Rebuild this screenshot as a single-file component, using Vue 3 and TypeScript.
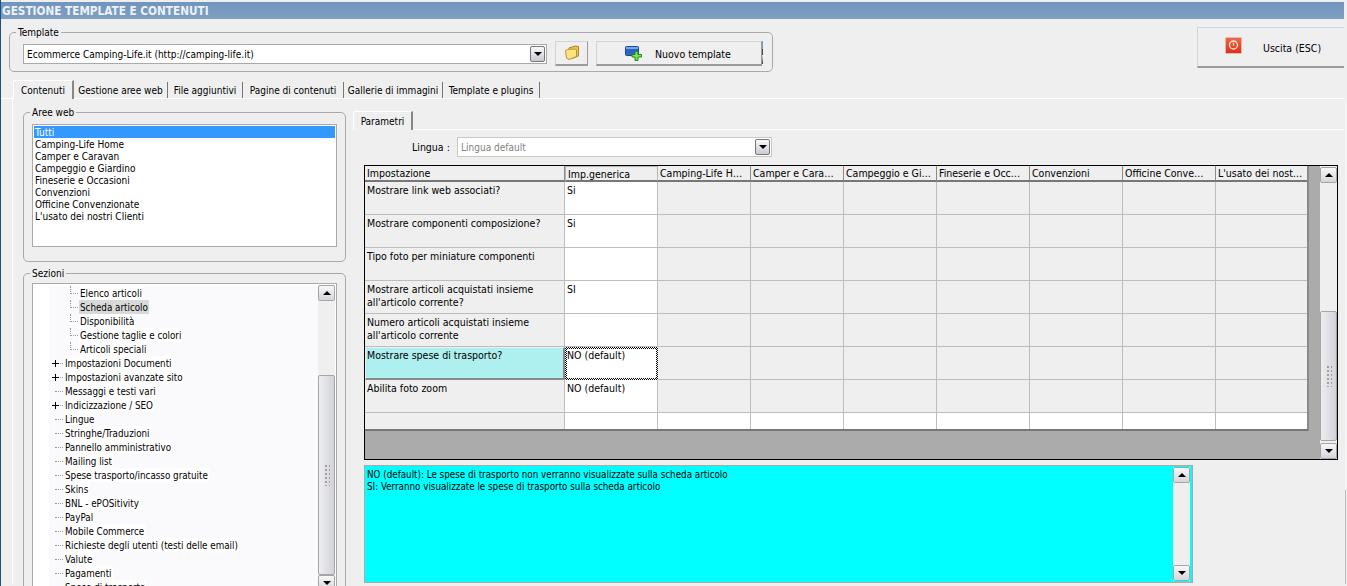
<script setup lang="ts">
interface Tab { label: string; width: number }
interface TreeItem { label: string; level: number; plus?: boolean; selected?: boolean }
interface GridRow { lines: string[]; value: string; active?: boolean }

const tabs: Tab[] = [
  { label: 'Contenuti', width: 61 },
  { label: 'Gestione aree web', width: 94 },
  { label: 'File aggiuntivi', width: 75 },
  { label: 'Pagine di contenuti', width: 101 },
  { label: 'Gallerie di immagini', width: 99 },
  { label: 'Template e plugins', width: 97 },
]
const areas = ['Camping-Life Home', 'Camper e Caravan', 'Campeggio e Giardino', 'Fineserie e Occasioni', 'Convenzioni', 'Officine Convenzionate', "L'usato dei nostri Clienti"]
const tree: TreeItem[] = [
  { label: 'Elenco articoli', level: 2 },
  { label: 'Scheda articolo', level: 2, selected: true },
  { label: 'Disponibilità', level: 2 },
  { label: 'Gestione taglie e colori', level: 2 },
  { label: 'Articoli speciali', level: 2 },
  { label: 'Impostazioni Documenti', level: 1, plus: true },
  { label: 'Impostazioni avanzate sito', level: 1, plus: true },
  { label: 'Messaggi e testi vari', level: 1 },
  { label: 'Indicizzazione / SEO', level: 1, plus: true },
  { label: 'Lingue', level: 1 },
  { label: 'Stringhe/Traduzioni', level: 1 },
  { label: 'Pannello amministrativo', level: 1 },
  { label: 'Mailing list', level: 1 },
  { label: 'Spese trasporto/incasso gratuite', level: 1 },
  { label: 'Skins', level: 1 },
  { label: 'BNL - ePOSitivity', level: 1 },
  { label: 'PayPal', level: 1 },
  { label: 'Mobile Commerce', level: 1 },
  { label: 'Richieste degli utenti (testi delle email)', level: 1 },
  { label: 'Valute', level: 1 },
  { label: 'Pagamenti', level: 1 },
  { label: 'Spese di trasporto', level: 1 },
]
const headers = ['Impostazione', 'Imp.generica', 'Camping-Life H…', 'Camper e Cara…', 'Campeggio e Gi…', 'Fineserie e Occ…', 'Convenzioni', 'Officine Conve…', "L'usato dei nost…"]
const rows: GridRow[] = [
  { lines: ['Mostrare link web associati?'], value: 'Si' },
  { lines: ['Mostrare componenti composizione?'], value: 'Si' },
  { lines: ['Tipo foto per miniature componenti'], value: '' },
  { lines: ['Mostrare articoli acquistati insieme', "all'articolo corrente?"], value: 'SI' },
  { lines: ['Numero articoli acquistati insieme', "all'articolo corrente"], value: '' },
  { lines: ['Mostrare spese di trasporto?'], value: 'NO (default)', active: true },
  { lines: ['Abilita foto zoom'], value: 'NO (default)' },
]
const blanks = Array.from({ length: 7 }, (_, i) => i)
</script>

<template>
  <div class="app">
    <div class="title">GESTIONE TEMPLATE E CONTENUTI</div>

    <div class="head">
      <fieldset class="group template">
        <legend>Template</legend>
        <div class="template-row">
          <div class="combo main-combo">
            <span class="combo-text">Ecommerce Camping-Life.it (http://camping-life.it)</span>
            <span class="combo-btn"><i class="down"></i></span>
          </div>
          <button class="btn folder" type="button" aria-label="Apri">
            <svg width="16" height="16" viewBox="0 0 16 16">
              <path d="M5 3 L11 1 L14.5 1.5 V11 L8 13.5 L5 12.5 Z" fill="#f0c93e" stroke="#a8842e" stroke-width="1" />
              <path d="M1.5 5.5 L3.5 4.5 L9.5 4 L12.5 4.5 V11.5 L5 14.5 L2.5 13 Z" fill="#fbe27a" stroke="#b8923a" stroke-width="1" />
            </svg>
          </button>
          <button class="btn new" type="button">
            <svg width="18" height="15" viewBox="0 0 18 15">
              <rect x="0.5" y="0.5" width="13" height="9" rx="1" fill="#2a62c8" stroke="#1c4a9a" />
              <rect x="1" y="1" width="12" height="2" fill="#78a6ea" />
              <path d="M10 5.5 H13 V8.5 H16.5 V11 H13 V14.5 H10 V11 H7 V8.5 H10 Z" fill="#7ee04e" stroke="#1f8a1f" stroke-width="1" />
            </svg>
            <span>Nuovo template</span>
          </button>
          <span class="btn-edge"></span>
        </div>
      </fieldset>
      <button class="btn exit" type="button">
        <svg width="17" height="17" viewBox="0 0 17 17">
          <defs>
            <linearGradient id="exit-red" x1="0" y1="0" x2="0" y2="1">
              <stop offset="0" stop-color="#ef6a45" />
              <stop offset="1" stop-color="#d5321c" />
            </linearGradient>
          </defs>
          <rect x="0.5" y="0.5" width="16" height="16" rx="1" fill="url(#exit-red)" stroke="#eeb5a5" />
          <circle cx="8.5" cy="8" r="4" fill="none" stroke="#fbe3dc" stroke-width="1.3" />
          <path d="M8.5 5.5 V8.5" stroke="#fbe3dc" stroke-width="1.3" />
        </svg>
        <span>Uscita (ESC)</span>
      </button>
    </div>

    <div class="tabs">
      <div
        v-for="(tab, i) in tabs"
        :key="tab.label"
        class="tab"
        :class="{ on: i === 0 }"
        :style="{ width: tab.width + 'px' }"
      >{{ tab.label }}</div>
    </div>

    <div class="body">
      <div class="left">
        <fieldset class="group areas">
          <legend>Aree web</legend>
          <div class="list">
            <div class="list-item sel">Tutti</div>
            <div v-for="a in areas" :key="a" class="list-item">{{ a }}</div>
          </div>
        </fieldset>
        <fieldset class="group sections">
          <legend>Sezioni</legend>
          <div class="tree">
            <div class="tree-items">
              <div v-for="t in tree" :key="t.label" class="node" :class="'lv' + t.level">
                <i class="dots"></i>
                <i v-if="t.plus" class="plus"></i>
                <span class="node-text" :class="{ selected: t.selected }">{{ t.label }}</span>
              </div>
            </div>
            <div class="vbar tree-bar">
              <span class="arrow"><i class="up"></i></span>
              <span class="track"><span class="thumb"><i class="grip"></i></span></span>
              <span class="arrow"><i class="down"></i></span>
            </div>
          </div>
        </fieldset>
      </div>

      <div class="right">
        <div class="subtabs"><div class="tab on sub">Parametri</div></div>
        <div class="lang">
          <span class="lang-label">Lingua :</span>
          <div class="combo lang-combo">
            <span class="combo-text muted">Lingua default</span>
            <span class="combo-btn"><i class="down"></i></span>
          </div>
        </div>

        <div class="grid-box">
          <div class="grid-area">
            <div class="grid">
              <div
                v-for="(h, i) in headers"
                :key="h"
                class="hd"
                :class="{ first: i === 0, cur: i === 1 }"
              >{{ h }}</div>
              <template v-for="r in rows" :key="r.lines[0]">
                <div class="rh" :class="{ active: r.active }">
                  <div v-for="l in r.lines" :key="l">{{ l }}</div>
                </div>
                <div class="val" :class="{ focus: r.active }">{{ r.value }}</div>
                <div v-for="b in blanks" :key="b" class="empty"></div>
              </template>
              <div class="rh tail"></div>
              <div class="val tail"></div>
              <div v-for="b in blanks" :key="b" class="val tail"></div>
            </div>
          </div>
          <div class="vbar grid-bar">
            <span class="arrow"><i class="up"></i></span>
            <span class="track"><span class="thumb"><i class="grip"></i></span></span>
            <span class="arrow"><i class="down"></i></span>
          </div>
        </div>

        <div class="desc">
          <div class="desc-text">
            <div>NO (default): Le spese di trasporto non verranno visualizzate sulla scheda articolo</div>
            <div>SI: Verranno visualizzate le spese di trasporto sulla scheda articolo</div>
          </div>
          <div class="vbar desc-bar">
            <span class="arrow"><i class="up"></i></span>
            <span class="track"></span>
            <span class="arrow"><i class="down"></i></span>
          </div>
        </div>
      </div>
    </div>
  </div>
</template>

<style>
html, body { margin: 0; background: #efefef; }
</style>

<style scoped>
.app {
  width: 1346px;
  height: 584px;
  padding-top: 2px;
  overflow: hidden;
  background: #efefef;
  border-left: 1px solid #1d4f7d;
  font-family: "DejaVu Sans Condensed", "DejaVu Sans", sans-serif;
  font-size: 10px;
  line-height: 13px;
  color: #000;
}
.title {
  width: 1343px;
  height: 17px;
  line-height: 18px;
  padding-left: 1px;
  box-sizing: border-box;
  font-size: 11.7px;
  font-weight: bold;
  color: #eef2f7;
  background: linear-gradient(#7095bc, #7f9fc3);
}
.head {
  display: flex;
  justify-content: space-between;
  align-items: flex-start;
  height: 61px;
  width: 1343px;
  padding-left: 8px;
  box-sizing: border-box;
}
.group {
  margin: 0;
  padding: 0 8px;
  border: 1px solid #aaa;
  border-radius: 5px;
  box-sizing: border-box;
  min-width: 0;
}
legend { padding: 0 2px; margin-left: -2px; line-height: 13px; }
.template { width: 764px; height: 46px; margin-top: 7px; }
.template-row { display: flex; align-items: flex-start; margin: 2px 0 0 5px; }
.combo {
  display: flex;
  align-items: center;
  justify-content: space-between;
  height: 20px;
  box-sizing: border-box;
  background: #fff;
  border: 1px solid #aaa;
}
.main-combo { width: 524px; margin-top: 3px; }
.combo-text { padding-left: 3px; }
.muted { color: #7f7f7f; }
.combo-btn {
  width: 15px;
  height: 16px;
  margin-right: 1px;
  display: flex;
  align-items: center;
  justify-content: center;
  border: 1px solid #777;
  border-radius: 2px;
  box-sizing: border-box;
  background: linear-gradient(#fafafa, #c9c9d3);
}
.down, .up {
  display: block;
  width: 0;
  height: 0;
  border-left: 4px solid transparent;
  border-right: 4px solid transparent;
}
.down { border-top: 4px solid #000; }
.up { border-bottom: 4px solid #000; }
.btn {
  display: flex;
  align-items: center;
  padding: 0;
  font: inherit;
  color: #000;
  background: #efefef;
  border: 1px solid #d3d3d8;
  border-bottom: 2px solid #9a9a9a;
  border-right: 1px solid #9a9a9a;
  box-sizing: border-box;
}
.folder { width: 33px; height: 25px; margin-left: 8px; justify-content: center; }
.new { width: 166px; height: 25px; margin-left: 8px; padding-left: 28px; gap: 12px; }
.new span { font-size: 10.5px; padding-top: 2px; }
.btn-edge { width: 1px; height: 23px; background: linear-gradient(#6a9bd0 35%, #444 35%, #444 60%, #efefef 60%, #333); }
.exit {
  width: 147px;
  height: 41px;
  margin-top: 8px;
  padding-left: 27px;
  gap: 21px;
  border-right: 0;
}
.exit svg { margin-top: -4px; }
.exit span { font-size: 10.5px; padding-top: 2px; }
.tabs {
  display: flex;
  height: 19px;
  width: 1343px;
  padding-left: 12px;
  box-sizing: border-box;
  border-bottom: 1px solid #fff;
}
.tab {
  text-align: center;
  box-sizing: border-box;
  border-right: 1px solid #777;
  margin-top: 2px;
  height: 16px;
  line-height: 17px;
}
.tab.on {
  height: 19px;
  margin-top: 0;
  line-height: 20px;
  background: #efefef;
  border-top: 1px solid #fff;
  border-left: 1px solid #fff;
  border-right: 2px solid #888;
  border-top-left-radius: 2px;
}
.body {
  display: flex;
  width: 1334px;
  height: 485px;
  margin-left: 11px;
  padding-left: 1px;
  box-sizing: border-box;
  background:
    linear-gradient(#fff, #fff) left top / 1px 100% no-repeat,
    linear-gradient(#f6f6f6 391px, #bdbdbd 391px) right top / 1px 100% no-repeat;
}
.left { width: 323px; margin-left: 10px; padding-top: 7px; flex: none; }
.areas { height: 156px; }
.list {
  height: 123px;
  margin-top: 5px;
  padding: 1px;
  box-sizing: border-box;
  background: #fff;
  border: 1px solid #aaa;
}
.list-item { height: 12px; line-height: 14px; padding-left: 1px; }
.sel { background: #3399ff; color: #fff; line-height: 13px; }
.sections { height: 400px; margin-top: 5px; }
.tree {
  display: flex;
  height: 320px;
  margin-top: 3px;
  background: #fff;
  border: 1px solid #aaa;
  border-bottom: 0;
  box-sizing: border-box;
  overflow: hidden;
  font-size: 9.75px;
}
.tree-items { flex: 1; padding: 2px 0 0 16px; }
.node {
  display: flex;
  align-items: center;
  height: 14px;
  position: relative;
  background: #fafafc;
  white-space: nowrap;
}
.lv1 { padding-left: 15px; }
.lv2 { padding-left: 30px; }
.node-text { background: #fff; padding: 0 1px 0 1px; line-height: 15px; height: 14px; }
.node-text.selected { background: #d9d9d9; }
.dots {
  position: absolute;
  top: 7px;
  height: 0;
  border-top: 1px dotted #9a9a9a;
}
.lv1 .dots { left: 6px; width: 8px; }
.lv2 .dots { left: 21px; width: 8px; }
.lv2 .dots::before {
  content: "";
  position: absolute;
  left: 0;
  top: -8px;
  height: 8px;
  border-left: 1px dotted #9a9a9a;
}
.plus {
  position: absolute;
  left: 3px;
  top: 4px;
  width: 7px;
  height: 7px;
  background:
    linear-gradient(#000, #000) center / 7px 1px no-repeat,
    linear-gradient(#000, #000) center / 1px 7px no-repeat,
    #fafafc;
}
.vbar {
  display: flex;
  flex-direction: column;
  width: 17px;
  flex: none;
  background: #efefef;
}
.arrow {
  display: flex;
  align-items: center;
  justify-content: center;
  width: 17px;
  height: 16px;
  flex: none;
  box-sizing: border-box;
  border: 1px solid #a5a5a5;
  border-radius: 2px;
  background: linear-gradient(#f8f8f8, #d5d5dc);
}
.track { display: flex; flex-direction: column; flex: 1; min-height: 0; }
.thumb {
  display: flex;
  align-items: center;
  justify-content: center;
  box-sizing: border-box;
  border: 1px solid #a5a5a5;
  border-radius: 2px;
  background: linear-gradient(90deg, #eeeef0, #d2d3da);
}
.grip {
  display: block;
  width: 6px;
  height: 22px;
  background:
    radial-gradient(circle, #a0a0a0 1px, transparent 1px) 0 0 / 4px 4px;
}
.tree-bar { margin: 1px 1px 0 0; height: 306px; }
.tree-bar .thumb { height: 200px; margin-top: 74px; }
.right {
  flex: none;
  width: 991px;
  margin-left: 7px;
  padding-top: 12px;
  box-sizing: border-box;
}
.subtabs {
  height: 19px;
  width: 991px;
  border-bottom: 1px solid #fff;
  box-sizing: border-box;
}
.tab.sub { width: 60px; }
.lang { display: flex; align-items: center; height: 20px; margin: 7px 0 0 59px; }
.lang-label { width: 45px; font-size: 10.5px; }
.lang-combo { width: 315px; border-color: #c9c9bd; }
.grid-box {
  display: flex;
  width: 974px;
  height: 295px;
  margin: 8px 0 0 11px;
  background: #ababab;
  border: 1px solid #000;
  box-sizing: border-box;
  font-size: 10.5px;
}
.grid-area { flex: 1; min-width: 0; background: #ababab; }
.grid {
  display: grid;
  grid-template-columns: 200px repeat(8, 93px);
  grid-template-rows: 16px repeat(7, 33px) 16px;
  width: 944px;
  border-right: 2px solid #8a8a8a;
  border-bottom: 2px solid #777;
  box-sizing: border-box;
  overflow: hidden;
}
.hd {
  padding-left: 2px;
  line-height: 15px;
  white-space: nowrap;
  overflow: hidden;
  background: #efefef;
  border-right: 1px solid #8a8a8a;
  border-bottom: 2px solid #777;
  box-sizing: border-box;
}
.hd.cur { border: 1px solid #b5b5b5; border-bottom: 2px solid #777; }
.rh, .val, .empty {
  padding: 2px 0 0 2px;
  box-sizing: border-box;
  border-right: 1px solid #bdbdbd;
  border-bottom: 1px solid #bdbdbd;
  line-height: 13px;
}
.rh, .empty { background: #efefef; }
.val { background: #fff; }
.rh.active {
  background: #aeefef;
  border: 1px solid #efefef;
  border-bottom: 2px solid #8a8a8a;
  border-right: 2px solid #8a8a8a;
  padding: 1px 0 0 1px;
}
.val.focus {
  padding: 0;
  border: 2px solid transparent;
  background:
    linear-gradient(#fff, #fff) padding-box,
    repeating-conic-gradient(#000 0 25%, #fff 0 50%) 0 0 / 2px 2px border-box;
}
.tail { border-bottom: 0; padding: 0; }
.grid-bar { height: 293px; }
.grid-bar .arrow:first-child { margin: 1px 0 0; }
.grid-bar .thumb { height: 130px; margin-top: 128px; }
.desc {
  display: flex;
  width: 829px;
  height: 118px;
  margin: 5px 0 0 11px;
  padding: 1px;
  box-sizing: border-box;
  background: #00ffff;
  border: 1px solid #aaa;
  font-size: 9.75px;
}
.desc-text { flex: 1; padding: 2px 0 0 1px; line-height: 12px; }
.desc-bar { margin-right: 1px; }
</style>
